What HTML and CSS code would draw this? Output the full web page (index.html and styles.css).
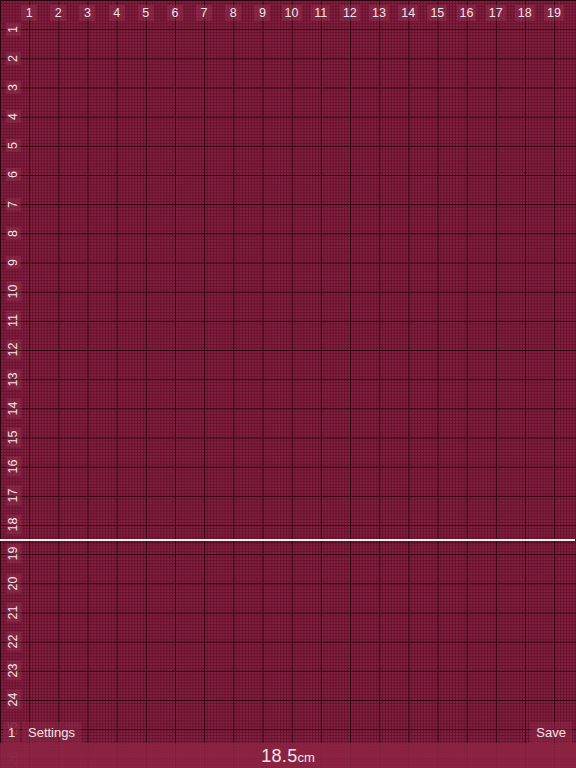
FILE: index.html
```html
<!DOCTYPE html>
<html>
<head>
<meta charset="utf-8">
<link rel="stylesheet" href="styles.css">
</head>
<body>
<div class="stage">
  <svg class="grid" width="576" height="768" viewBox="0 0 576 768" xmlns="http://www.w3.org/2000/svg">
    <defs>
      <pattern id="minor" x="0" y="0" width="2.9167" height="2.9167" patternUnits="userSpaceOnUse">
        <rect width="2.9167" height="2.9167" fill="#8a2143"/>
        <rect width="2.9167" height="0.8" fill="#60112b"/>
        <rect width="0.8" height="2.9167" fill="#60112b"/>
      </pattern>
      <pattern id="major" x="0" y="0" width="29.1667" height="29.1667" patternUnits="userSpaceOnUse">
        <rect width="29.1667" height="29.1667" fill="url(#minor)"/>
        <rect width="29.1667" height="1" fill="#28040d"/>
        <rect width="1" height="29.1667" fill="#28040d"/>
      </pattern>
    </defs>
    <rect width="576" height="768" fill="url(#major)"/>
  </svg>

  <div class="top-ruler">
    <span class="cell"><b class="tag">1</b></span>
    <span class="cell"><b class="tag">2</b></span>
    <span class="cell"><b class="tag">3</b></span>
    <span class="cell"><b class="tag">4</b></span>
    <span class="cell"><b class="tag">5</b></span>
    <span class="cell"><b class="tag">6</b></span>
    <span class="cell"><b class="tag">7</b></span>
    <span class="cell"><b class="tag">8</b></span>
    <span class="cell"><b class="tag">9</b></span>
    <span class="cell"><b class="tag">10</b></span>
    <span class="cell"><b class="tag">11</b></span>
    <span class="cell"><b class="tag">12</b></span>
    <span class="cell"><b class="tag">13</b></span>
    <span class="cell"><b class="tag">14</b></span>
    <span class="cell"><b class="tag">15</b></span>
    <span class="cell"><b class="tag">16</b></span>
    <span class="cell"><b class="tag">17</b></span>
    <span class="cell"><b class="tag">18</b></span>
    <span class="cell"><b class="tag">19</b></span>
  </div>

  <div class="left-ruler">
    <span class="row"><b class="vtag">1</b></span>
    <span class="row"><b class="vtag">2</b></span>
    <span class="row"><b class="vtag">3</b></span>
    <span class="row"><b class="vtag">4</b></span>
    <span class="row"><b class="vtag">5</b></span>
    <span class="row"><b class="vtag">6</b></span>
    <span class="row"><b class="vtag">7</b></span>
    <span class="row"><b class="vtag">8</b></span>
    <span class="row"><b class="vtag">9</b></span>
    <span class="row"><b class="vtag">10</b></span>
    <span class="row"><b class="vtag">11</b></span>
    <span class="row"><b class="vtag">12</b></span>
    <span class="row"><b class="vtag">13</b></span>
    <span class="row"><b class="vtag">14</b></span>
    <span class="row"><b class="vtag">15</b></span>
    <span class="row"><b class="vtag">16</b></span>
    <span class="row"><b class="vtag">17</b></span>
    <span class="row"><b class="vtag">18</b></span>
    <span class="row"><b class="vtag">19</b></span>
    <span class="row"><b class="vtag">20</b></span>
    <span class="row"><b class="vtag">21</b></span>
    <span class="row"><b class="vtag">22</b></span>
    <span class="row"><b class="vtag">23</b></span>
    <span class="row"><b class="vtag">24</b></span>
    <span class="row"><b class="vtag faint">25</b></span>
    <span class="row"><b class="vtag faint">26</b></span>
  </div>

  <div class="measure-line"></div>

  <div class="toolbar">
    <span class="count">1</span>
    <span class="btn">Settings</span>
    <span class="spacer"></span>
    <span class="btn">Save</span>
  </div>

  <div class="readout"><span class="value">18.5</span><span class="unit">cm</span></div>
</div>
</body>
</html>
```

FILE: styles.css
```css
html, body {
  margin: 0;
  padding: 0;
  background: #7e1d3c;
}
.stage {
  position: relative;
  width: 576px;
  height: 768px;
  overflow: hidden;
  font-family: "Liberation Sans", Arial, sans-serif;
  color: #f3e3e8;
}
.grid {
  display: block;
}
.top-ruler {
  position: absolute;
  top: 5px;
  left: 14.58px;
  display: flex;
}
.cell {
  width: 29.1667px;
  display: flex;
  justify-content: center;
}
.tag {
  font-weight: normal;
  font-size: 12.5px;
  line-height: 16px;
  height: 16px;
  padding: 0 3px;
  min-width: 10px;
  text-align: center;
  background: rgba(160, 60, 90, 0.35);
}
.left-ruler {
  position: absolute;
  left: 6px;
  top: 14.58px;
  display: flex;
  flex-direction: column;
}
.row {
  height: 29.1667px;
  width: 15px;
  display: flex;
  align-items: center;
  justify-content: center;
}
.vtag {
  font-weight: normal;
  font-size: 12.5px;
  line-height: 15px;
  padding: 0 3px;
  white-space: nowrap;
  transform: rotate(-90deg);
  background: rgba(160, 60, 90, 0.35);
}
.vtag.faint {
  color: rgba(243, 227, 232, 0.25);
  background: transparent;
}
.measure-line {
  position: absolute;
  left: 0;
  top: 539px;
  width: 575px;
  height: 2px;
  background: #f4f0f1;
  box-shadow: 0 1px 3px rgba(20, 0, 5, 0.6);
}
.toolbar {
  position: absolute;
  left: 3px;
  right: 4px;
  top: 722px;
  height: 21px;
  display: flex;
  align-items: center;
  gap: 2px;
  font-size: 13px;
}
.count {
  width: 17px;
  height: 21px;
  line-height: 21px;
  text-align: center;
  background: rgba(140, 40, 70, 0.55);
}
.btn {
  height: 21px;
  line-height: 21px;
  padding: 0 6px;
  background: rgba(140, 40, 70, 0.55);
}
.spacer {
  flex: 1;
}
.readout {
  position: absolute;
  left: 0;
  right: 0;
  bottom: 0;
  height: 25px;
  display: flex;
  justify-content: center;
  align-items: baseline;
  padding-top: 3px;
  box-sizing: border-box;
  background: rgba(140, 36, 66, 0.88);
}
.value {
  font-size: 18px;
  letter-spacing: 0.3px;
}
.unit {
  font-size: 13px;
}
```
